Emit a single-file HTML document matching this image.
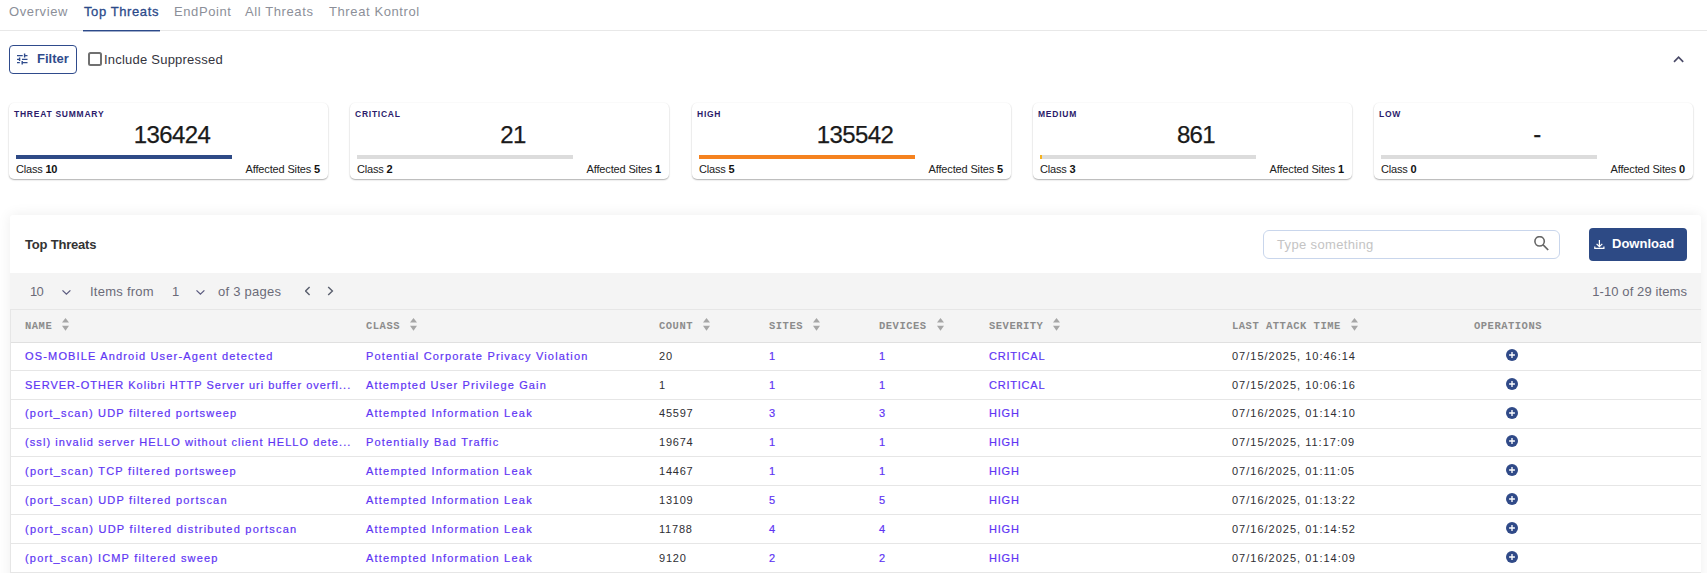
<!DOCTYPE html>
<html><head><meta charset="utf-8">
<style>
*{box-sizing:border-box;margin:0;padding:0}
html,body{width:1707px;height:573px;overflow:hidden;background:#fff;font-family:"Liberation Sans",sans-serif;position:relative}
.abs{position:absolute;white-space:nowrap}
.tabs{position:absolute;left:0;top:0;width:1707px;height:31px;border-bottom:1px solid #e8e8e8}
.tab{position:absolute;top:4px;font-size:13px;letter-spacing:.6px;color:#8c8f99;line-height:16px}
.tab.act{color:#2c4a8a;-webkit-text-stroke:.3px #2c4a8a}
.uline{position:absolute;left:83px;top:30px;width:77px;height:1px;background:#2c4a8a;box-shadow:0 1px 0 rgba(44,74,138,.45)}
.filter{position:absolute;left:9px;top:45px;width:68px;height:29px;border:1px solid #2f4b8c;border-radius:4px}
.filter .t{position:absolute;left:27px;top:5px;font-size:13px;font-weight:bold;color:#2f4b8c;line-height:16px}
.chk{position:absolute;left:88.2px;top:52.1px;width:13.5px;height:13.5px;border:2px solid #707070;border-radius:2.5px}
.card{position:absolute;top:103px;width:319px;height:76px;background:#fff;border-radius:5px;box-shadow:0 1px 1.5px rgba(0,0,0,.3),0 0 2px rgba(0,0,0,.06)}
.card .ttl{position:absolute;left:5px;top:5.5px;font-size:8.5px;font-weight:bold;letter-spacing:.75px;color:#2b1b6b;line-height:11px}
.card .num{position:absolute;left:-1px;width:328px;text-align:center;top:18px;font-size:24px;letter-spacing:-.6px;color:#1a1a1a;-webkit-text-stroke:.25px #1a1a1a;line-height:28px}
.card .bar{position:absolute;left:7px;top:52px;width:216px;height:4px;background:#dcdcdc}
.card .bar i{position:absolute;left:0;top:0;height:4px;display:block}
.card .cl{position:absolute;left:7px;top:60px;font-size:11px;letter-spacing:-.2px;color:#222;line-height:13px}
.card .as{position:absolute;right:8px;top:60px;font-size:11px;letter-spacing:-.15px;color:#222;line-height:13px}
.card b{font-weight:bold;color:#111}
.panel{position:absolute;left:10px;top:215px;width:1691px;height:400px;background:#fff;border-radius:3px;overflow:hidden;box-shadow:0 0 14px rgba(0,0,0,.075)}
.ptitle{position:absolute;left:15px;letter-spacing:-.2px;top:22px;font-size:13px;font-weight:bold;color:#333;line-height:16px}
.search{position:absolute;left:1253px;top:15px;width:297px;height:29px;border:1px solid #c9d6ec;border-radius:6px}
.search .ph{position:absolute;left:13px;top:6px;font-size:13px;letter-spacing:.35px;color:#c4c4c4;line-height:16px}
.dl{position:absolute;left:1579px;top:13px;width:98px;height:33px;background:#2d4a85;border-radius:4px}
.dl .t{position:absolute;left:23px;top:8px;font-size:13px;font-weight:bold;color:#fff;line-height:16px}
.tool{position:absolute;left:0;top:58px;width:1692px;height:36px;background:#f4f4f4}
.tool .t{position:absolute;top:11px;font-size:13px;letter-spacing:.25px;color:#6b6b78;line-height:16px}
.thead{position:absolute;left:0;top:94px;width:1692px;height:34px;background:#f4f4f4;border-top:1px solid #e6e6e6;border-bottom:1px solid #e0e0e0;border-left:1px solid #e6e6e6}
.th{position:absolute;top:10px;font-family:"Liberation Mono",monospace;font-weight:bold;font-size:10.5px;letter-spacing:.5px;color:#8c8c8c;display:flex;align-items:center;line-height:13px}
.sort{position:absolute;top:6px;width:8px;height:14px}
.rows{position:absolute;left:0;top:127.1px;width:1692px;border-left:1px solid #e6e6e6}
.row{position:relative;height:28.857px;border-bottom:1px solid #e6e6e6}
.td{position:absolute;top:7.6px;font-size:11px;letter-spacing:1.12px;line-height:13px;color:#6035f4;-webkit-text-stroke:.2px #6035f4;white-space:nowrap}
.td.k{color:#2e2e33;-webkit-text-stroke:0}
.td.n{letter-spacing:.78px}
.td.d{letter-spacing:1px}
.plus{position:absolute;left:1495px;top:6.8px;width:12px;height:12px}
</style></head><body>
<div class="tabs">
  <div class="tab" style="left:9px">Overview</div>
  <div class="tab act" style="left:84px">Top Threats</div>
  <div class="tab" style="left:174px">EndPoint</div>
  <div class="tab" style="left:245px">All Threats</div>
  <div class="tab" style="left:329px">Threat Kontrol</div>
  <div class="uline"></div>
</div>
<div class="filter">
  <svg class="abs" style="left:2px;top:4px" width="20" height="18" viewBox="0 0 20 18"><g stroke="#2f4b8c" stroke-width="1.25" fill="none"><path d="M5 5.5h5.7M12.6 5.5h2.9M5 9.3h2.6M10 9.3h5.5M5 12.7h2.8M10.2 12.7h5.3"/><path d="M12.6 3.4v4.2M7.6 7.5v3.4M10.2 11v3.4" stroke-width="1.4"/></g></svg>
  <div class="t">Filter</div>
</div>
<div class="chk"></div>
<div class="abs" style="left:104px;top:52px;font-size:13px;color:#34343e;letter-spacing:.22px;line-height:16px">Include Suppressed</div>
<svg class="abs" style="left:1672px;top:55px" width="13" height="8" viewBox="0 0 13 8"><path d="M2 6.8L6.6 2.2L11.2 6.8" stroke="#4b4b68" stroke-width="1.7" fill="none"/></svg>

<div class="card" style="left:9px">
  <div class="ttl">THREAT SUMMARY</div>
  <div class="num">136424</div>
  <div class="bar" style="background:#2e4a86"></div>
  <div class="cl">Class <b>10</b></div>
  <div class="as">Affected Sites <b>5</b></div>
</div>
<div class="card" style="left:350px">
  <div class="ttl">CRITICAL</div>
  <div class="num">21</div>
  <div class="bar"></div>
  <div class="cl">Class <b>2</b></div>
  <div class="as">Affected Sites <b>1</b></div>
</div>
<div class="card" style="left:692px">
  <div class="ttl">HIGH</div>
  <div class="num">135542</div>
  <div class="bar" style="background:#f5821f"></div>
  <div class="cl">Class <b>5</b></div>
  <div class="as">Affected Sites <b>5</b></div>
</div>
<div class="card" style="left:1033px">
  <div class="ttl">MEDIUM</div>
  <div class="num">861</div>
  <div class="bar"><i style="width:2px;background:#f5b21f"></i></div>
  <div class="cl">Class <b>3</b></div>
  <div class="as">Affected Sites <b>1</b></div>
</div>
<div class="card" style="left:1374px">
  <div class="ttl">LOW</div>
  <div class="num" style="top:17px">-</div>
  <div class="bar"></div>
  <div class="cl">Class <b>0</b></div>
  <div class="as">Affected Sites <b>0</b></div>
</div>

<div class="panel">
  <div class="ptitle">Top Threats</div>
  <div class="search"><div class="ph">Type something</div>
    <svg class="abs" style="left:270px;top:5px" width="16" height="16" viewBox="0 0 16 16"><circle cx="5.6" cy="5.3" r="4.7" stroke="#666" stroke-width="1.6" fill="none"/><path d="M8.9 8.7L14.2 14" stroke="#666" stroke-width="1.7"/></svg>
  </div>
  <div class="dl">
    <svg class="abs" style="left:5px;top:12px" width="11" height="10" viewBox="0 0 11 10"><g stroke="#fff" stroke-width="1.25" fill="none"><path d="M5.4 0v6.2M2.6 3.9L5.4 6.6L8.3 3.9M0.8 6.4V8.3H9.9V6.4"/></g></svg>
    <div class="t">Download</div>
  </div>
  <div class="tool">
    <div class="t" style="left:20px;letter-spacing:-.8px">10</div>
    <svg class="abs" style="left:52px;top:15px" width="9" height="8" viewBox="0 0 9 8"><path d="M0.5 2.4L4.4 6.2L8.4 2.4" stroke="#5a5a7e" stroke-width="1.3" fill="none"/></svg>
    <div class="t" style="left:80px">Items from</div>
    <div class="t" style="left:162px">1</div>
    <svg class="abs" style="left:186px;top:15px" width="9" height="8" viewBox="0 0 9 8"><path d="M0.5 2.4L4.4 6.2L8.4 2.4" stroke="#5a5a7e" stroke-width="1.3" fill="none"/></svg>
    <div class="t" style="left:208px">of 3 pages</div>
    <svg class="abs" style="left:295px;top:13px" width="7" height="10" viewBox="0 0 7 10"><path d="M4.6 0.9L0.6 5L4.6 9" stroke="#5a5f6e" stroke-width="1.4" fill="none"/></svg>
    <svg class="abs" style="left:317px;top:13px" width="7" height="10" viewBox="0 0 7 10"><path d="M1.2 0.9L5.4 5L1.2 9" stroke="#5a5f6e" stroke-width="1.4" fill="none"/></svg>
    <div class="t" style="right:15px;letter-spacing:.1px">1-10 of 29 items</div>
  </div>
  <div class="thead">
    <div class="th" style="left:14px">NAME<svg width="7" height="13" viewBox="0 0 7 13" style="margin-left:10px;position:relative;top:-2.3px"><path d="M3.5 0L7 4.6H0z M0 7.8h7L3.5 12.8z" fill="#a6a6a6"/></svg></div>
    <div class="th" style="left:355px">CLASS<svg width="7" height="13" viewBox="0 0 7 13" style="margin-left:10px;position:relative;top:-2.3px"><path d="M3.5 0L7 4.6H0z M0 7.8h7L3.5 12.8z" fill="#a6a6a6"/></svg></div>
    <div class="th" style="left:648px">COUNT<svg width="7" height="13" viewBox="0 0 7 13" style="margin-left:10px;position:relative;top:-2.3px"><path d="M3.5 0L7 4.6H0z M0 7.8h7L3.5 12.8z" fill="#a6a6a6"/></svg></div>
    <div class="th" style="left:758px">SITES<svg width="7" height="13" viewBox="0 0 7 13" style="margin-left:10px;position:relative;top:-2.3px"><path d="M3.5 0L7 4.6H0z M0 7.8h7L3.5 12.8z" fill="#a6a6a6"/></svg></div>
    <div class="th" style="left:868px">DEVICES<svg width="7" height="13" viewBox="0 0 7 13" style="margin-left:10px;position:relative;top:-2.3px"><path d="M3.5 0L7 4.6H0z M0 7.8h7L3.5 12.8z" fill="#a6a6a6"/></svg></div>
    <div class="th" style="left:978px">SEVERITY<svg width="7" height="13" viewBox="0 0 7 13" style="margin-left:10px;position:relative;top:-2.3px"><path d="M3.5 0L7 4.6H0z M0 7.8h7L3.5 12.8z" fill="#a6a6a6"/></svg></div>
    <div class="th" style="left:1221px">LAST ATTACK TIME<svg width="7" height="13" viewBox="0 0 7 13" style="margin-left:10px;position:relative;top:-2.3px"><path d="M3.5 0L7 4.6H0z M0 7.8h7L3.5 12.8z" fill="#a6a6a6"/></svg></div>
    <div class="th" style="left:1463px">OPERATIONS</div>
  </div>
  <div class="rows" id="rows">
<div class="row"><div class="td" style="left:14px;letter-spacing:1.164px">OS-MOBILE Android User-Agent detected</div><div class="td" style="left:355px;letter-spacing:1.178px">Potential Corporate Privacy Violation</div><div class="td k n" style="left:648px">20</div><div class="td n" style="left:758px">1</div><div class="td n" style="left:868px">1</div><div class="td n" style="left:978px">CRITICAL</div><div class="td k d" style="left:1221px">07/15/2025, 10:46:14</div><svg class="plus" viewBox="0 0 12 12"><circle cx="6" cy="6" r="6" fill="#304a88"/><path d="M6 3.1v5.8M3.1 6h5.8" stroke="#fff" stroke-width="1.35"/></svg></div>
<div class="row"><div class="td" style="left:14px;letter-spacing:0.999px">SERVER-OTHER Kolibri HTTP Server uri buffer overfl...</div><div class="td" style="left:355px;letter-spacing:1.138px">Attempted User Privilege Gain</div><div class="td k n" style="left:648px">1</div><div class="td n" style="left:758px">1</div><div class="td n" style="left:868px">1</div><div class="td n" style="left:978px">CRITICAL</div><div class="td k d" style="left:1221px">07/15/2025, 10:06:16</div><svg class="plus" viewBox="0 0 12 12"><circle cx="6" cy="6" r="6" fill="#304a88"/><path d="M6 3.1v5.8M3.1 6h5.8" stroke="#fff" stroke-width="1.35"/></svg></div>
<div class="row"><div class="td" style="left:14px;letter-spacing:1.199px">(port_scan) UDP filtered portsweep</div><div class="td" style="left:355px;letter-spacing:1.220px">Attempted Information Leak</div><div class="td k n" style="left:648px">45597</div><div class="td n" style="left:758px">3</div><div class="td n" style="left:868px">3</div><div class="td n" style="left:978px">HIGH</div><div class="td k d" style="left:1221px">07/16/2025, 01:14:10</div><svg class="plus" viewBox="0 0 12 12"><circle cx="6" cy="6" r="6" fill="#304a88"/><path d="M6 3.1v5.8M3.1 6h5.8" stroke="#fff" stroke-width="1.35"/></svg></div>
<div class="row"><div class="td" style="left:14px;letter-spacing:1.077px">(ssl) invalid server HELLO without client HELLO dete...</div><div class="td" style="left:355px;letter-spacing:1.184px">Potentially Bad Traffic</div><div class="td k n" style="left:648px">19674</div><div class="td n" style="left:758px">1</div><div class="td n" style="left:868px">1</div><div class="td n" style="left:978px">HIGH</div><div class="td k d" style="left:1221px">07/15/2025, 11:17:09</div><svg class="plus" viewBox="0 0 12 12"><circle cx="6" cy="6" r="6" fill="#304a88"/><path d="M6 3.1v5.8M3.1 6h5.8" stroke="#fff" stroke-width="1.35"/></svg></div>
<div class="row"><div class="td" style="left:14px;letter-spacing:1.226px">(port_scan) TCP filtered portsweep</div><div class="td" style="left:355px;letter-spacing:1.220px">Attempted Information Leak</div><div class="td k n" style="left:648px">14467</div><div class="td n" style="left:758px">1</div><div class="td n" style="left:868px">1</div><div class="td n" style="left:978px">HIGH</div><div class="td k d" style="left:1221px">07/16/2025, 01:11:05</div><svg class="plus" viewBox="0 0 12 12"><circle cx="6" cy="6" r="6" fill="#304a88"/><path d="M6 3.1v5.8M3.1 6h5.8" stroke="#fff" stroke-width="1.35"/></svg></div>
<div class="row"><div class="td" style="left:14px;letter-spacing:1.204px">(port_scan) UDP filtered portscan</div><div class="td" style="left:355px;letter-spacing:1.220px">Attempted Information Leak</div><div class="td k n" style="left:648px">13109</div><div class="td n" style="left:758px">5</div><div class="td n" style="left:868px">5</div><div class="td n" style="left:978px">HIGH</div><div class="td k d" style="left:1221px">07/16/2025, 01:13:22</div><svg class="plus" viewBox="0 0 12 12"><circle cx="6" cy="6" r="6" fill="#304a88"/><path d="M6 3.1v5.8M3.1 6h5.8" stroke="#fff" stroke-width="1.35"/></svg></div>
<div class="row"><div class="td" style="left:14px;letter-spacing:1.234px">(port_scan) UDP filtered distributed portscan</div><div class="td" style="left:355px;letter-spacing:1.220px">Attempted Information Leak</div><div class="td k n" style="left:648px">11788</div><div class="td n" style="left:758px">4</div><div class="td n" style="left:868px">4</div><div class="td n" style="left:978px">HIGH</div><div class="td k d" style="left:1221px">07/16/2025, 01:14:52</div><svg class="plus" viewBox="0 0 12 12"><circle cx="6" cy="6" r="6" fill="#304a88"/><path d="M6 3.1v5.8M3.1 6h5.8" stroke="#fff" stroke-width="1.35"/></svg></div>
<div class="row"><div class="td" style="left:14px;letter-spacing:1.183px">(port_scan) ICMP filtered sweep</div><div class="td" style="left:355px;letter-spacing:1.220px">Attempted Information Leak</div><div class="td k n" style="left:648px">9120</div><div class="td n" style="left:758px">2</div><div class="td n" style="left:868px">2</div><div class="td n" style="left:978px">HIGH</div><div class="td k d" style="left:1221px">07/16/2025, 01:14:09</div><svg class="plus" viewBox="0 0 12 12"><circle cx="6" cy="6" r="6" fill="#304a88"/><path d="M6 3.1v5.8M3.1 6h5.8" stroke="#fff" stroke-width="1.35"/></svg></div>
<div class="row"><div class="td" style="left:14px;letter-spacing:1.120px">(port_scan) TCP portsweep</div><div class="td" style="left:355px;letter-spacing:1.120px">Attempted Information Leak</div><div class="td k n" style="left:648px">500</div><div class="td n" style="left:758px">1</div><div class="td n" style="left:868px">1</div><div class="td n" style="left:978px">HIGH</div><div class="td k d" style="left:1221px">07/16/2025, 01:10:00</div><svg class="plus" viewBox="0 0 12 12"><circle cx="6" cy="6" r="6" fill="#304a88"/><path d="M6 3.1v5.8M3.1 6h5.8" stroke="#fff" stroke-width="1.35"/></svg></div>
</div>
</div>
</body></html>
